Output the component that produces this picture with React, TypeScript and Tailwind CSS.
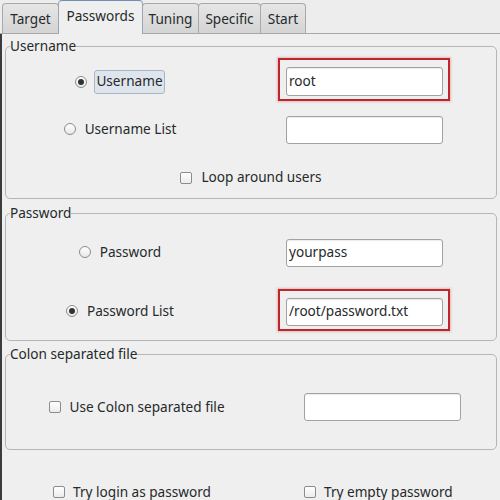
import React from "react";

function Radio({ checked = false }: { checked?: boolean }) {
  return (
    <span className="w-[12px] h-[12px] rounded-full border border-[#8c8c8c] bg-gradient-to-b from-white to-[#e8e8e8] flex items-center justify-center shrink-0">
      {checked && <span className="w-[6px] h-[6px] rounded-full bg-[#2e3436]" />}
    </span>
  );
}

function Check() {
  return <span className="w-[12px] h-[12px] rounded-[2px] border border-[#8c8c8c] bg-gradient-to-b from-white to-[#ececec] shrink-0" />;
}

function Entry({ value = "", marked = false, h = "h-[29px]" }: { value?: string; marked?: boolean; h?: string }) {
  return (
    <div className="relative w-[157px]">
      {/* red annotation box */}
      {marked && (
        <div className="absolute -left-[8px] -top-[9px] -right-[7px] -bottom-[5px] border-2 border-[#bf262c] shadow-[0_0_2px_1px_rgba(210,90,90,0.35)]" />
      )}
      <div className={`relative ${h} w-full rounded-[3px] border border-[#a2a2a2] bg-white px-[2px] flex items-center shadow-[inset_0_1px_1px_rgba(0,0,0,0.08)]`}>
        {value}
      </div>
    </div>
  );
}

function Tab({ label, w, active = false }: { label: string; w: string; active?: boolean }) {
  if (active) {
    return (
      <div className={`${w} h-[34px] -ml-px -mb-px relative z-10 rounded-t-[4px] border border-b-0 border-[#9aa6b4] border-t-[#6f8fb3] bg-[#efefef] flex items-center justify-center pb-[2px]`}>
        {label}
      </div>
    );
  }
  return (
    <div className={`${w} h-[30px] -ml-px first:ml-0 rounded-t-[4px] border border-b-0 border-[#a9a9a9] bg-gradient-to-b from-[#e6e6e6] to-[#d4d4d4] flex items-center justify-center pt-[2px]`}>
      {label}
    </div>
  );
}

function Frame({ title, className = "", children }: { title: string; className?: string; children: React.ReactNode }) {
  return (
    <fieldset className={`mx-[3px] border border-[#b5b5b5] rounded-[5px] ${className}`}>
      <legend className="ml-[4px] leading-[18px]">{title}</legend>
      {children}
    </fieldset>
  );
}

export default function App() {
  return (
    <div className="w-[500px] h-[500px] overflow-hidden bg-[#ededed] text-[13.6px] text-[#262a2b] font-['Noto_Sans',sans-serif] flex flex-col">
      {/* Tabs */}
      <div className="h-[34px] shrink-0 flex items-end pl-[2px] border-b border-[#a8a8a8]">
        <Tab label="Target" w="w-[57px]" />
        <Tab label="Passwords" w="w-[85px]" active />
        <Tab label="Tuning" w="w-[57px]" />
        <Tab label="Specific" w="w-[63px]" />
        <Tab label="Start" w="w-[46px]" />
      </div>

      {/* Page */}
      <div className="flex-1 border-l-2 border-[#3c3c3c] bg-[#efefef] pt-[3px]">
        <Frame title="Username" className="pb-[6px]">
          <div className="mt-[12px] h-[29px] flex items-center">
            <div className="w-[228px] flex justify-center items-center">
              <Radio checked />
              <span className="ml-[7px] h-[24px] px-[1px] rounded-[3px] border border-[#aab5c4] bg-[#dfe5ed] flex items-center">Username</span>
            </div>
            <div className="ml-[52px]">
              <Entry value="root" marked />
            </div>
          </div>
          <div className="mt-[19px] h-[29px] flex items-center">
            <div className="w-[228px] flex justify-center items-center gap-[9px]">
              <Radio />
              <span>Username List</span>
            </div>
            <div className="ml-[52px]">
              <Entry h="h-[28px]" />
            </div>
          </div>
          <div className="mt-[19px] h-[29px] flex items-center justify-center gap-[9px]">
            <Check />
            <span>Loop around users</span>
          </div>
        </Frame>

        <Frame title="Password" className="mt-[5px] pb-[14px]">
          <div className="mt-[16px] h-[29px] flex items-center">
            <div className="w-[228px] flex justify-center items-center gap-[9px]">
              <Radio />
              <span>Password</span>
            </div>
            <div className="ml-[52px]">
              <Entry value="yourpass" h="h-[28px]" />
            </div>
          </div>
          <div className="mt-[30px] h-[29px] flex items-center">
            <div className="w-[228px] flex justify-center items-center gap-[9px]">
              <Radio checked />
              <span>Password List</span>
            </div>
            <div className="ml-[52px]">
              <Entry value="/root/password.txt" h="h-[28px]" marked />
            </div>
          </div>
        </Frame>

        <Frame title="Colon separated file" className="mt-[4px] pb-[28px]">
          <div className="mt-[30px] h-[28px] flex items-center">
            <div className="w-[262px] flex justify-center items-center gap-[8px]">
              <Check />
              <span>Use Colon separated file</span>
            </div>
            <div className="ml-[36px]">
              <Entry h="h-[28px]" />
            </div>
          </div>
        </Frame>

        <div className="mt-[33px] px-[3px] h-[18px] flex items-center">
          <div className="w-[254px] flex justify-center items-center gap-[8px]">
            <Check />
            <span>Try login as password</span>
          </div>
          <div className="ml-[45px] flex items-center gap-[8px]">
            <Check />
            <span>Try empty password</span>
          </div>
        </div>
      </div>
    </div>
  );
}
